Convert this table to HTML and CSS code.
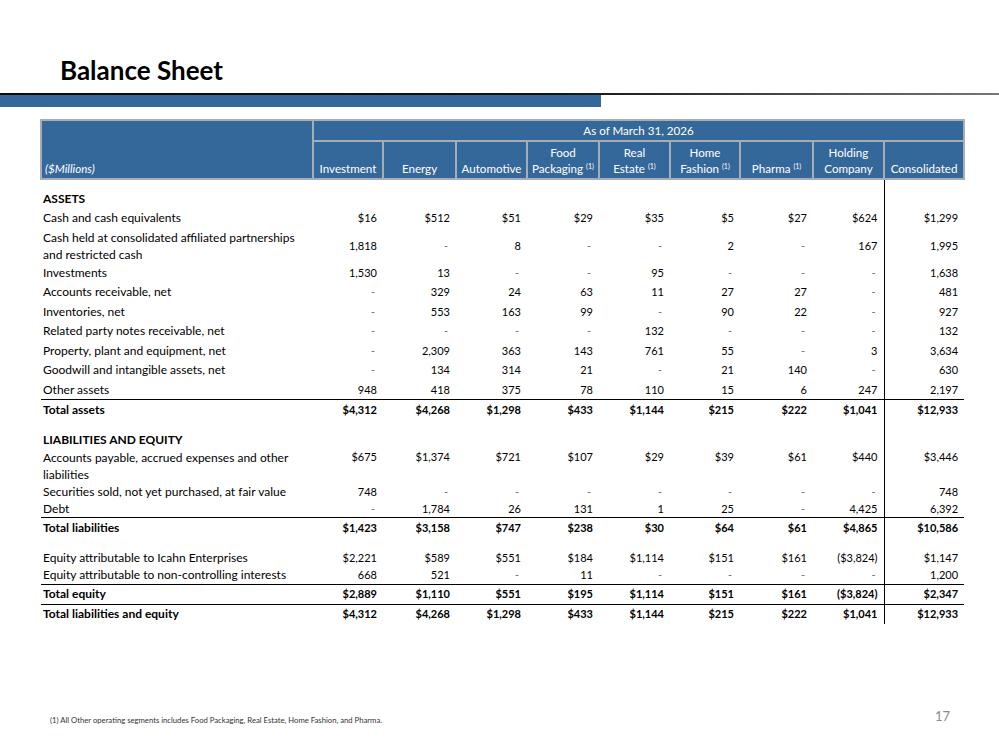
FILE: index.html
```html
<!DOCTYPE html>
<html lang="en">
<head>
<meta charset="utf-8">
<title>Balance Sheet</title>
<link rel="stylesheet" href="styles.css">
</head>
<body>
<div class="page">
  <header class="title-area">
    <h1 class="title">Balance Sheet</h1>
  </header>
  <div class="rule"></div>
  <div class="band"></div>

  <table class="bs">
    <colgroup>
      <col class="c-label"><col class="c-70"><col class="c-73"><col class="c-71"><col class="c-72"><col class="c-71"><col class="c-70"><col class="c-73"><col class="c-71"><col class="c-80">
    </colgroup>
    <thead>
      <tr class="h-top">
        <th class="corner" rowspan="2">($Millions)</th>
        <th class="asof" colspan="9">As of March 31, 2026</th>
      </tr>
      <tr class="h-cols">
        <th>Investment</th>
        <th>Energy</th>
        <th>Automotive</th>
        <th>Food<br>Packaging <sup>(1)</sup></th>
        <th>Real<br>Estate <sup>(1)</sup></th>
        <th>Home<br>Fashion <sup>(1)</sup></th>
        <th>Pharma <sup>(1)</sup></th>
        <th>Holding<br>Company</th>
        <th>Consolidated</th>
      </tr>
    </thead>
    <tbody>
      <tr class="gap g10"><td></td><td></td><td></td><td></td><td></td><td></td><td></td><td></td><td></td><td class="cons"></td></tr>
      <tr class="sec r19"><td class="lbl">ASSETS</td><td></td><td></td><td></td><td></td><td></td><td></td><td></td><td></td><td class="cons"></td></tr>
      <tr class="r19"><td class="lbl">Cash and cash equivalents</td><td>$16</td><td>$512</td><td>$51</td><td>$29</td><td>$35</td><td>$5</td><td>$27</td><td>$624</td><td class="cons">$1,299</td></tr>
      <tr class="r35"><td class="lbl two">Cash held at consolidated affiliated partnerships<br>and restricted cash</td><td>1,818</td><td><span class="dash">-</span></td><td>8</td><td><span class="dash">-</span></td><td><span class="dash">-</span></td><td>2</td><td><span class="dash">-</span></td><td>167</td><td class="cons">1,995</td></tr>
      <tr class="r19"><td class="lbl">Investments</td><td>1,530</td><td>13</td><td><span class="dash">-</span></td><td><span class="dash">-</span></td><td>95</td><td><span class="dash">-</span></td><td><span class="dash">-</span></td><td><span class="dash">-</span></td><td class="cons">1,638</td></tr>
      <tr class="r19"><td class="lbl">Accounts receivable, net</td><td><span class="dash">-</span></td><td>329</td><td>24</td><td>63</td><td>11</td><td>27</td><td>27</td><td><span class="dash">-</span></td><td class="cons">481</td></tr>
      <tr class="r19"><td class="lbl">Inventories, net</td><td><span class="dash">-</span></td><td>553</td><td>163</td><td>99</td><td><span class="dash">-</span></td><td>90</td><td>22</td><td><span class="dash">-</span></td><td class="cons">927</td></tr>
      <tr class="r19"><td class="lbl">Related party notes receivable, net</td><td><span class="dash">-</span></td><td><span class="dash">-</span></td><td><span class="dash">-</span></td><td><span class="dash">-</span></td><td>132</td><td><span class="dash">-</span></td><td><span class="dash">-</span></td><td><span class="dash">-</span></td><td class="cons">132</td></tr>
      <tr class="r19"><td class="lbl">Property, plant and equipment, net</td><td><span class="dash">-</span></td><td>2,309</td><td>363</td><td>143</td><td>761</td><td>55</td><td><span class="dash">-</span></td><td>3</td><td class="cons">3,634</td></tr>
      <tr class="r19"><td class="lbl">Goodwill and intangible assets, net</td><td><span class="dash">-</span></td><td>134</td><td>314</td><td>21</td><td><span class="dash">-</span></td><td>21</td><td>140</td><td><span class="dash">-</span></td><td class="cons">630</td></tr>
      <tr class="r19 ul"><td class="lbl">Other assets</td><td>948</td><td>418</td><td>375</td><td>78</td><td>110</td><td>15</td><td>6</td><td>247</td><td class="cons">2,197</td></tr>
      <tr class="total r20"><td class="lbl">Total assets</td><td>$4,312</td><td>$4,268</td><td>$1,298</td><td>$433</td><td>$1,144</td><td>$215</td><td>$222</td><td>$1,041</td><td class="cons">$12,933</td></tr>
      <tr class="gap g11"><td></td><td></td><td></td><td></td><td></td><td></td><td></td><td></td><td></td><td class="cons"></td></tr>
      <tr class="sec r18"><td class="lbl">LIABILITIES AND EQUITY</td><td></td><td></td><td></td><td></td><td></td><td></td><td></td><td></td><td class="cons"></td></tr>
      <tr class="r35 top"><td class="lbl two">Accounts payable, accrued expenses and other<br>liabilities</td><td>$675</td><td>$1,374</td><td>$721</td><td>$107</td><td>$29</td><td>$39</td><td>$61</td><td>$440</td><td class="cons">$3,446</td></tr>
      <tr class="r17"><td class="lbl">Securities sold, not yet purchased, at fair value</td><td>748</td><td><span class="dash">-</span></td><td><span class="dash">-</span></td><td><span class="dash">-</span></td><td><span class="dash">-</span></td><td><span class="dash">-</span></td><td><span class="dash">-</span></td><td><span class="dash">-</span></td><td class="cons">748</td></tr>
      <tr class="r17 ul"><td class="lbl">Debt</td><td><span class="dash">-</span></td><td>1,784</td><td>26</td><td>131</td><td>1</td><td>25</td><td><span class="dash">-</span></td><td>4,425</td><td class="cons">6,392</td></tr>
      <tr class="total r20"><td class="lbl">Total liabilities</td><td>$1,423</td><td>$3,158</td><td>$747</td><td>$238</td><td>$30</td><td>$64</td><td>$61</td><td>$4,865</td><td class="cons">$10,586</td></tr>
      <tr class="gap g11"><td></td><td></td><td></td><td></td><td></td><td></td><td></td><td></td><td></td><td class="cons"></td></tr>
      <tr class="r18"><td class="lbl">Equity attributable to Icahn Enterprises</td><td>$2,221</td><td>$589</td><td>$551</td><td>$184</td><td>$1,114</td><td>$151</td><td>$161</td><td>($3,824)</td><td class="cons">$1,147</td></tr>
      <tr class="r18 ul"><td class="lbl">Equity attributable to non-controlling interests</td><td>668</td><td>521</td><td><span class="dash">-</span></td><td>11</td><td><span class="dash">-</span></td><td><span class="dash">-</span></td><td><span class="dash">-</span></td><td><span class="dash">-</span></td><td class="cons">1,200</td></tr>
      <tr class="total r19 ul"><td class="lbl">Total equity</td><td>$2,889</td><td>$1,110</td><td>$551</td><td>$195</td><td>$1,114</td><td>$151</td><td>$161</td><td>($3,824)</td><td class="cons">$2,347</td></tr>
      <tr class="total r20"><td class="lbl">Total liabilities and equity</td><td>$4,312</td><td>$4,268</td><td>$1,298</td><td>$433</td><td>$1,144</td><td>$215</td><td>$222</td><td>$1,041</td><td class="cons">$12,933</td></tr>
    </tbody>
  </table>

  <footer class="foot">
    <p class="footnote">(1) All Other operating segments includes Food Packaging, Real Estate, Home Fashion, and Pharma.</p>
    <span class="pageno">17</span>
  </footer>
</div>
</body>
</html>
```

FILE: styles.css
```css
* { box-sizing: border-box; }

html, body {
  margin: 0;
  padding: 0;
  background: #ffffff;
}

body {
  font-family: Lato, "Liberation Sans", Arial, sans-serif;
  color: #000;
}

.page {
  width: 999px;
  height: 750px;
  display: flex;
  flex-direction: column;
  overflow: hidden;
  background: #fff;
}

/* ---------- title ---------- */
.title-area {
  height: 93px;
  padding: 55px 0 0 60px;
}

.title {
  margin: 0;
  font-size: 26px;
  line-height: 30px;
  font-weight: 700;
  color: #000;
}

.rule {
  height: 2px;
  background: linear-gradient(to right, #0a0a0a 0%, #111 55%, #555 85%, #777 100%);
}

.band {
  width: 601px;
  height: 12px;
  background: #35689a;
}

/* ---------- table ---------- */
.bs {
  margin: 12px 0 0 40px;
  width: 923px;
  table-layout: fixed;
  border-collapse: collapse;
  font-size: 11px;
}

.c-label { width: 272px; }
.c-70 { width: 70px; }
.c-71 { width: 71px; }
.c-72 { width: 72px; }
.c-73 { width: 73px; }
.c-80 { width: 80px; }

.bs thead th {
  background: #35689a;
  color: #fff;
  font-weight: 400;
  font-size: 11.6px;
  border: 2px solid #a7adb5;
  padding: 0 2px;
  line-height: 16px;
  vertical-align: bottom;
  text-align: center;
  white-space: nowrap;
}

.bs thead .h-top th { height: 21px; vertical-align: middle; }
.bs thead .h-cols th { height: 38px; padding-bottom: 1px; }

.bs thead .h-top th.corner {
  text-align: left;
  font-style: italic;
  vertical-align: bottom;
  padding: 0 0 1px 3px;
}

.bs sup {
  font-size: 7px;
  line-height: 0;
  vertical-align: 4px;
}

.bs tbody td {
  padding: 0 6px 0 0;
  text-align: right;
  vertical-align: middle;
  line-height: 16px;
  white-space: nowrap;
}

.bs tbody td.lbl {
  text-align: left;
  padding-left: 2px;
  font-size: 12px;
}

.bs tbody td.two { line-height: 17px; }

.bs tbody tr.top td { vertical-align: top; }

.bs tbody td.cons { border-left: 1px solid #000; }

.bs tbody tr.ul td { border-bottom: 1px solid #000; }

.bs tbody tr.sec td.lbl,
.bs tbody tr.total td { font-weight: 700; }

.dash {
  color: #6b6b6b;
  padding-right: 2px;
}

.g10 td { height: 10px; }
.g11 td { height: 11px; }
.r17 td { height: 17px; }
.r18 td { height: 18px; }
.r19 td { height: 19.5px; }
.r20 td { height: 20px; }
.r35 td { height: 35px; }

/* ---------- footer ---------- */
.foot {
  margin-top: auto;
  display: flex;
  justify-content: space-between;
  align-items: flex-end;
  padding: 0 49px 25px 50px;
}

.footnote {
  margin: 0;
  font-size: 7.7px;
  line-height: 10px;
  color: #333;
}

.pageno {
  font-size: 13px;
  line-height: 15px;
  color: #8a8a8a;
  margin-bottom: 1px;
}
```
